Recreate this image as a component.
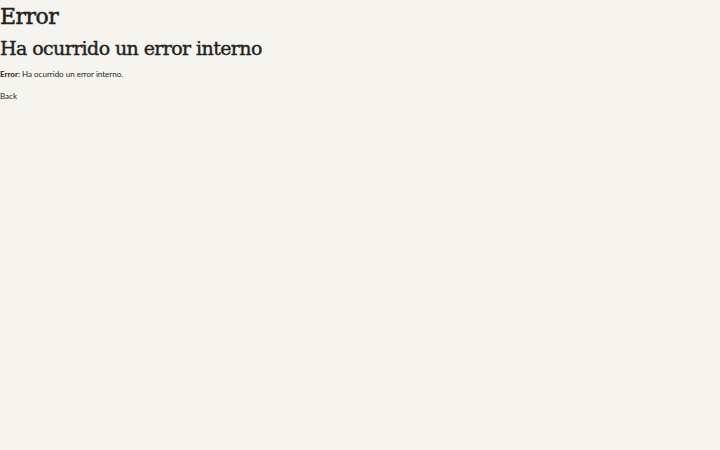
export default function App() {
  return (
    <div className="min-h-[450px] w-full bg-[#f5f4ef] text-[#222222]">
      <h1 className="font-['DejaVu_Serif',serif] text-[22px] leading-[33px] tracking-[-0.5px] [-webkit-text-stroke:0.5px_#222222]">
        Error
      </h1>
      <h2 className="font-['DejaVu_Serif',serif] text-[19px] leading-[30px] tracking-[-0.6px] [-webkit-text-stroke:0.4px_#222222]">
        Ha ocurrido un error interno
      </h2>
      <p className="mt-[4px] font-['Lato',sans-serif] text-[8px] leading-[14px]">
        <strong className="font-bold">Error:</strong> Ha ocurrido un error interno.
      </p>
      <p className="mt-[8px] font-['Lato',sans-serif] text-[8px] leading-[14px]">
        <a href="#" className="text-[#222222]">Back</a>
      </p>
    </div>
  );
}
